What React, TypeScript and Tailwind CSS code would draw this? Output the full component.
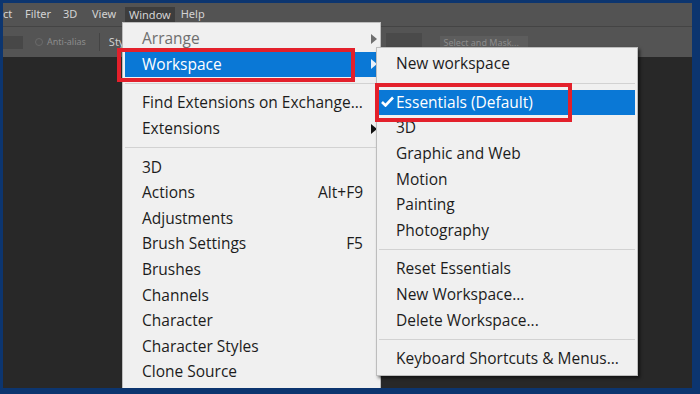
import React from 'react'

type Item = { label: string; shortcut?: string; arrow?: boolean; disabled?: boolean; active?: boolean; check?: boolean } | 'sep'

const windowMenu: Item[] = [
    { label: 'Arrange', arrow: true, disabled: true },
    { label: 'Workspace', arrow: true, active: true },
    'sep',
    { label: 'Find Extensions on Exchange...' },
    { label: 'Extensions', arrow: true },
    'sep',
    { label: '3D' },
    { label: 'Actions', shortcut: 'Alt+F9' },
    { label: 'Adjustments' },
    { label: 'Brush Settings', shortcut: 'F5' },
    { label: 'Brushes' },
    { label: 'Channels' },
    { label: 'Character' },
    { label: 'Character Styles' },
    { label: 'Clone Source' },
]

const workspaceMenu: Item[] = [
    { label: 'New workspace' },
    'sep',
    { label: 'Essentials (Default)', active: true, check: true },
    { label: '3D' },
    { label: 'Graphic and Web' },
    { label: 'Motion' },
    { label: 'Painting' },
    { label: 'Photography' },
    'sep',
    { label: 'Reset Essentials' },
    { label: 'New Workspace...' },
    { label: 'Delete Workspace...' },
    'sep',
    { label: 'Keyboard Shortcuts & Menus...' },
]

function Arrow({ color }: { color: string }) {
    return (
        <svg width="6" height="10" viewBox="0 0 6 10" className="shrink-0">
            <path d="M0 0 L6 5 L0 10 Z" fill={color} />
        </svg>
    )
}

function MenuRows({ items }: { items: Item[] }) {
    return (
        <>
            {items.map((it, i) => {
                if (it === 'sep') {
                    return (
                        <div key={i} className="py-[6px] px-[2px]">
                            <div className="h-px bg-[#d2d2d2]" />
                        </div>
                    )
                }
                return (
                    <div
                        key={i}
                        className={
                            'h-[25.6px] mx-[2px] flex items-center pl-[15px] pr-[1px] ' +
                            (it.active ? 'bg-[#0a78d6] text-white' : it.disabled ? 'text-[#6f6f6f]' : 'text-[#1c1c1c]')
                        }
                    >
                        <span className="w-[2px] relative">
                            {it.check && (
                                <svg width="13" height="11" viewBox="0 0 13 11" className="absolute -left-[13px] -top-[6px]">
                                    <path d="M1 6 L4.5 9.5 L12 1.5" stroke="white" strokeWidth="2.6" fill="none" />
                                </svg>
                            )}
                        </span>
                        <span className="flex-1 whitespace-nowrap">{it.label}</span>
                        {it.shortcut && <span className="pr-[14px]">{it.shortcut}</span>}
                        {it.arrow && (
                            <Arrow color={it.active ? '#e8f1fb' : it.disabled ? '#6f6f6f' : '#111'} />
                        )}
                    </div>
                )
            })}
        </>
    )
}

export default function App() {
    return (
        <div className="w-[700px] h-[394px] bg-[#0c356f] pt-[3px] pl-[3px] pr-[8px] pb-[6px] font-['Open_Sans',sans-serif]">
            <div className="relative w-full h-full overflow-hidden flex flex-col bg-[#282828]">
                {/* menu bar */}
                <div className="h-[23px] bg-[#535353] flex items-center text-[11px] text-[#d4d4d4] font-['Noto_Sans',sans-serif]">
                    <span className="w-[22px]">ct</span>
                    <span className="w-[38px]">Filter</span>
                    <span className="w-[29px]">3D</span>
                    <span className="w-[33px]">View</span>
                    <span className="h-[18px] mt-[2px] px-[4px] mr-[6px] bg-[#3d3d3d] flex items-center">Window</span>
                    <span>Help</span>
                </div>
                <div className="h-px bg-[#444]" />
                {/* options bar */}
                <div className="h-[30px] bg-[#545454] flex items-center text-[9px] font-['Noto_Sans',sans-serif]">
                    <div className="w-[20px] h-[13px] bg-[#474747]" />
                    <div className="ml-[12px] w-[8px] h-[8px] rounded-full border border-[#6a6a6a]" />
                    <span className="ml-[4px] text-[#8c8c8c]">Anti-alias</span>
                    <div className="ml-[13px] w-px h-[18px] bg-[#444]" />
                    <span className="ml-[9px] text-[11px] text-[#cfcfcf]">Sty</span>
                    <div className="ml-[262px] w-[36px] h-[18px] bg-[#4a4a4a]" />
                    <div className="ml-[18px] w-[88px] h-[13px] bg-[#5d5d5d] text-[#8c8c8c] pl-[3px] leading-[13px]">Select and Mask...</div>
                </div>
                <div className="flex-1 bg-[#282828]" />

                {/* Window menu */}
                <div className="absolute left-[119px] top-[19px] w-[259px] h-[400px] bg-[#f0f0f0] border border-[#bdbdbd] pt-[3px] text-[15.5px]">
                    <MenuRows items={windowMenu} />
                </div>

                {/* Workspace submenu */}
                <div className="absolute left-[373px] top-[44px] w-[262px] bg-[#f0f0f0] border border-[#bdbdbd] pt-[3px] pb-[3px] text-[15.5px] shadow-[2px_2px_3px_rgba(0,0,0,0.55)]">
                    <MenuRows items={workspaceMenu} />
                </div>

                {/* highlight boxes */}
                <div className="absolute left-[114px] top-[45px] w-[238px] h-[34px] border-[4px] border-[#e3202b]" />
                <div className="absolute left-[372px] top-[80px] w-[197px] h-[39px] border-[4px] border-[#e3202b]" />
            </div>
        </div>
    )
}
